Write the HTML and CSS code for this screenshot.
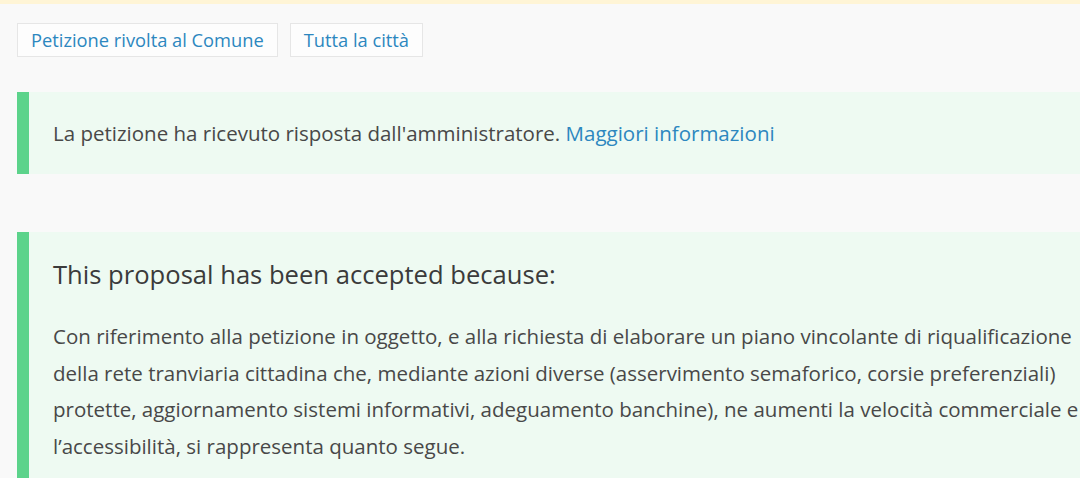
FILE: index.html
```html
<!DOCTYPE html>
<html lang="it">
<head>
<meta charset="utf-8">
<title>Petizione</title>
<link rel="stylesheet" href="styles.css">
</head>
<body>
<div class="topbar"></div>
<main class="page">
  <div class="tags">
    <a class="tag" href="#">Petizione rivolta al Comune</a>
    <a class="tag" href="#">Tutta la città</a>
  </div>
  <div class="callout callout-info">
    <p>La petizione ha ricevuto risposta dall'amministratore. <a class="link" href="#">Maggiori informazioni</a></p>
  </div>
  <div class="callout callout-answer">
    <h2 class="answer-title">This proposal has been accepted because:</h2>
    <p class="answer-body">Con riferimento alla petizione in oggetto, e alla richiesta di elaborare un piano vincolante di riqualificazione della rete tranviaria cittadina che, mediante azioni diverse (asservimento semaforico, corsie preferenziali) protette, aggiornamento sistemi informativi, adeguamento banchine), ne aumenti la velocità commerciale e l’accessibilità, si rappresenta quanto segue.</p>
  </div>
</main>
</body>
</html>
```
FILE: styles.css
```css
html, body {
  margin: 0;
  padding: 0;
}
body {
  background: #f9f9f9;
  font-family: "Open Sans", "Liberation Sans", sans-serif;
  color: #484848;
  overflow: hidden;
  width: 1080px;
  height: 478px;
}
.topbar {
  height: 4px;
  background: #fff5d6;
}
.page {
  width: 1200px;
  padding: 19px 0 0 17px;
}
.tags {
  display: flex;
  gap: 12px;
}
.tag {
  display: inline-block;
  height: 32px;
  line-height: 32px;
  padding: 0 13px;
  border: 1px solid #e6e6e6;
  background: #fdfdfd;
  color: #2c87bf;
  font-size: 18.3px;
  text-decoration: none;
}
.callout {
  background: #eefaf2;
  border-left: 12px solid #5cd38b;
  padding: 0 0 0 24px;
}
.callout p {
  margin: 0;
}
.callout-info {
  margin-top: 35px;
  height: 82px;
  display: flex;
  align-items: center;
  font-size: 20.5px;
}
.link {
  color: #2c87bf;
  text-decoration: none;
}
.callout-answer {
  margin-top: 58px;
  padding-top: 26px;
  padding-bottom: 30px;
}
.answer-title {
  margin: 0;
  font-size: 25.6px;
  font-weight: 400;
  color: #3b3b3b;
  line-height: 34px;
}
.answer-body {
  width: 1055px;
  margin-top: 26px !important;
  font-size: 20.5px;
  line-height: 36.5px;
}
```
